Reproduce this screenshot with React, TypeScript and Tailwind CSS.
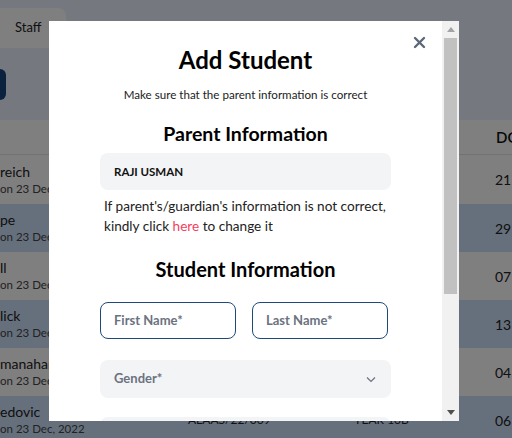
import React from "react";

const rows = [
  { name: "reich", bg: "bg-white", h: "h-[49px]", id: "ALAAS/22/004", cls: "YEAR 10A", dob: "21" },
  { name: "pe", bg: "bg-[#cde1f9]", h: "h-[48px]", id: "ALAAS/22/005", cls: "YEAR 10A", dob: "29" },
  { name: "ll", bg: "bg-white", h: "h-[48px]", id: "ALAAS/22/006", cls: "YEAR 10B", dob: "07" },
  { name: "lick", bg: "bg-[#cde1f9]", h: "h-[48px]", id: "ALAAS/22/007", cls: "YEAR 10B", dob: "13" },
  { name: "manahan", bg: "bg-white", h: "h-[48px]", id: "ALAAS/22/008", cls: "YEAR 10B", dob: "04" },
  { name: "edovic", bg: "bg-[#cde1f9]", h: "h-[48px]", id: "ALAAS/22/009", cls: "YEAR 10B", dob: "06" },
];

export default function App() {
  return (
    <div
      className="relative w-[512px] h-[438px] overflow-hidden bg-[#eaf0ff] text-[#333]"
      style={{ fontFamily: "Lato, 'Open Sans', sans-serif" }}
    >
      {/* top tabs */}
      <div className="h-[48px] pt-[8px] flex">
        <div className="w-[66px] h-[40px] bg-[#fefefe] rounded-tr-[8px] flex items-center pl-[15px] text-[13px] text-[#222]">
          Staff
        </div>
      </div>
      {/* toolbar */}
      <div className="h-[72px] pt-[21px]">
        <div className="w-[6px] h-[31px] bg-[#17457f] rounded-r-[6px]" />
      </div>
      {/* table header */}
      <div className="h-[35px] bg-white border-b border-[#e5e5e5] flex items-center">
        <div className="ml-[496px] text-[15px] font-semibold text-[#111] whitespace-nowrap">DOB</div>
      </div>
      {rows.map((r, i) => (
        <div key={i} className={`${r.bg} ${r.h} flex items-center whitespace-nowrap`}>
          <div className="w-[188px] shrink-0 flex flex-col leading-[17px]">
            <span className="text-[14px] text-[#222]">{r.name}</span>
            <span className="text-[11.5px] text-[#444]">on 23 Dec, 2022</span>
          </div>
          <div className="w-[166px] shrink-0 text-[12px] text-[#222]">{r.id}</div>
          <div className="w-[141px] shrink-0 text-[12px] text-[#222]">{r.cls}</div>
          <div className="text-[14px] text-[#222]">{r.dob} Dec</div>
        </div>
      ))}

      {/* overlay */}
      <div className="absolute inset-0 bg-black/50" />

      {/* modal */}
      <div className="absolute left-[49px] top-[21px] w-[410px] h-[400px] bg-white flex">
        <div className="flex-1 relative overflow-hidden">
          <button className="absolute right-[16px] top-[15px] text-[#5a6878]">
            <svg width="13" height="13" viewBox="0 0 13 13">
              <path d="M2 2 L11 11 M11 2 L2 11" stroke="currentColor" strokeWidth="2.4" strokeLinecap="round" />
            </svg>
          </button>
          <div className="pt-[24px] px-[51px] flex flex-col items-center">
            <h1 className="text-[24px] font-bold text-black leading-[30px]">Add Student</h1>
            <p className="mt-[12px] text-[11.6px] text-[#222] leading-[16px] whitespace-nowrap">Make sure that the parent information is correct</p>
            <h2 className="mt-[18px] text-[19.5px] font-bold text-black leading-[26px]">Parent Information</h2>
            <div className="mt-[6px] w-full h-[37px] bg-[#f3f4f6] rounded-[8px] flex items-center px-[14px] text-[11.5px] font-bold text-[#111]">
              RAJI USMAN
            </div>
            <p className="mt-[6px] w-full pl-[4px] text-[13.6px] leading-[20px] text-[#222] whitespace-nowrap">
              If parent's/guardian's information is not correct,
              <br />
              kindly click <span className="text-[#f43f5e]">here</span> to change it
            </p>
            <h2 className="mt-[20px] text-[20px] font-bold text-black leading-[26px]">Student Information</h2>
            <div className="mt-[20px] w-full flex gap-[16px]">
              <div className="w-[136px] h-[37px] border border-[#1d4a7c] rounded-[8px] flex items-center px-[13px] text-[13px] font-bold text-[#6b7280]">
                First Name*
              </div>
              <div className="w-[136px] h-[37px] border border-[#1d4a7c] rounded-[8px] flex items-center px-[13px] text-[13px] font-bold text-[#6b7280]">
                Last Name*
              </div>
            </div>
            <div className="mt-[21px] w-full h-[38px] bg-[#f3f4f6] rounded-[8px] flex items-center justify-between px-[14px] text-[13px] font-bold text-[#6b7280]">
              <span>Gender*</span>
              <svg width="12" height="12" viewBox="0 0 12 12">
                <path d="M2 4.5 L6 8.5 L10 4.5" stroke="#6b7280" strokeWidth="1.2" fill="none" />
              </svg>
            </div>
            <div className="mt-[19px] w-full h-[38px] bg-[#f3f4f6] rounded-[8px]" />
          </div>
        </div>
        {/* scrollbar */}
        <div className="w-[17px] h-full bg-[#f1f1f1] flex flex-col items-center">
          <div className="h-[17px] flex items-center justify-center">
            <svg width="8" height="5" viewBox="0 0 8 5"><path d="M0 5 L4 0 L8 5 Z" fill="#a3a3a3" /></svg>
          </div>
          <div className="w-[13px] h-[256px] bg-[#c1c1c1]" />
          <div className="flex-1" />
          <div className="h-[17px] flex items-center justify-center">
            <svg width="8" height="5" viewBox="0 0 8 5"><path d="M0 0 L8 0 L4 5 Z" fill="#505050" /></svg>
          </div>
        </div>
      </div>
    </div>
  );
}
